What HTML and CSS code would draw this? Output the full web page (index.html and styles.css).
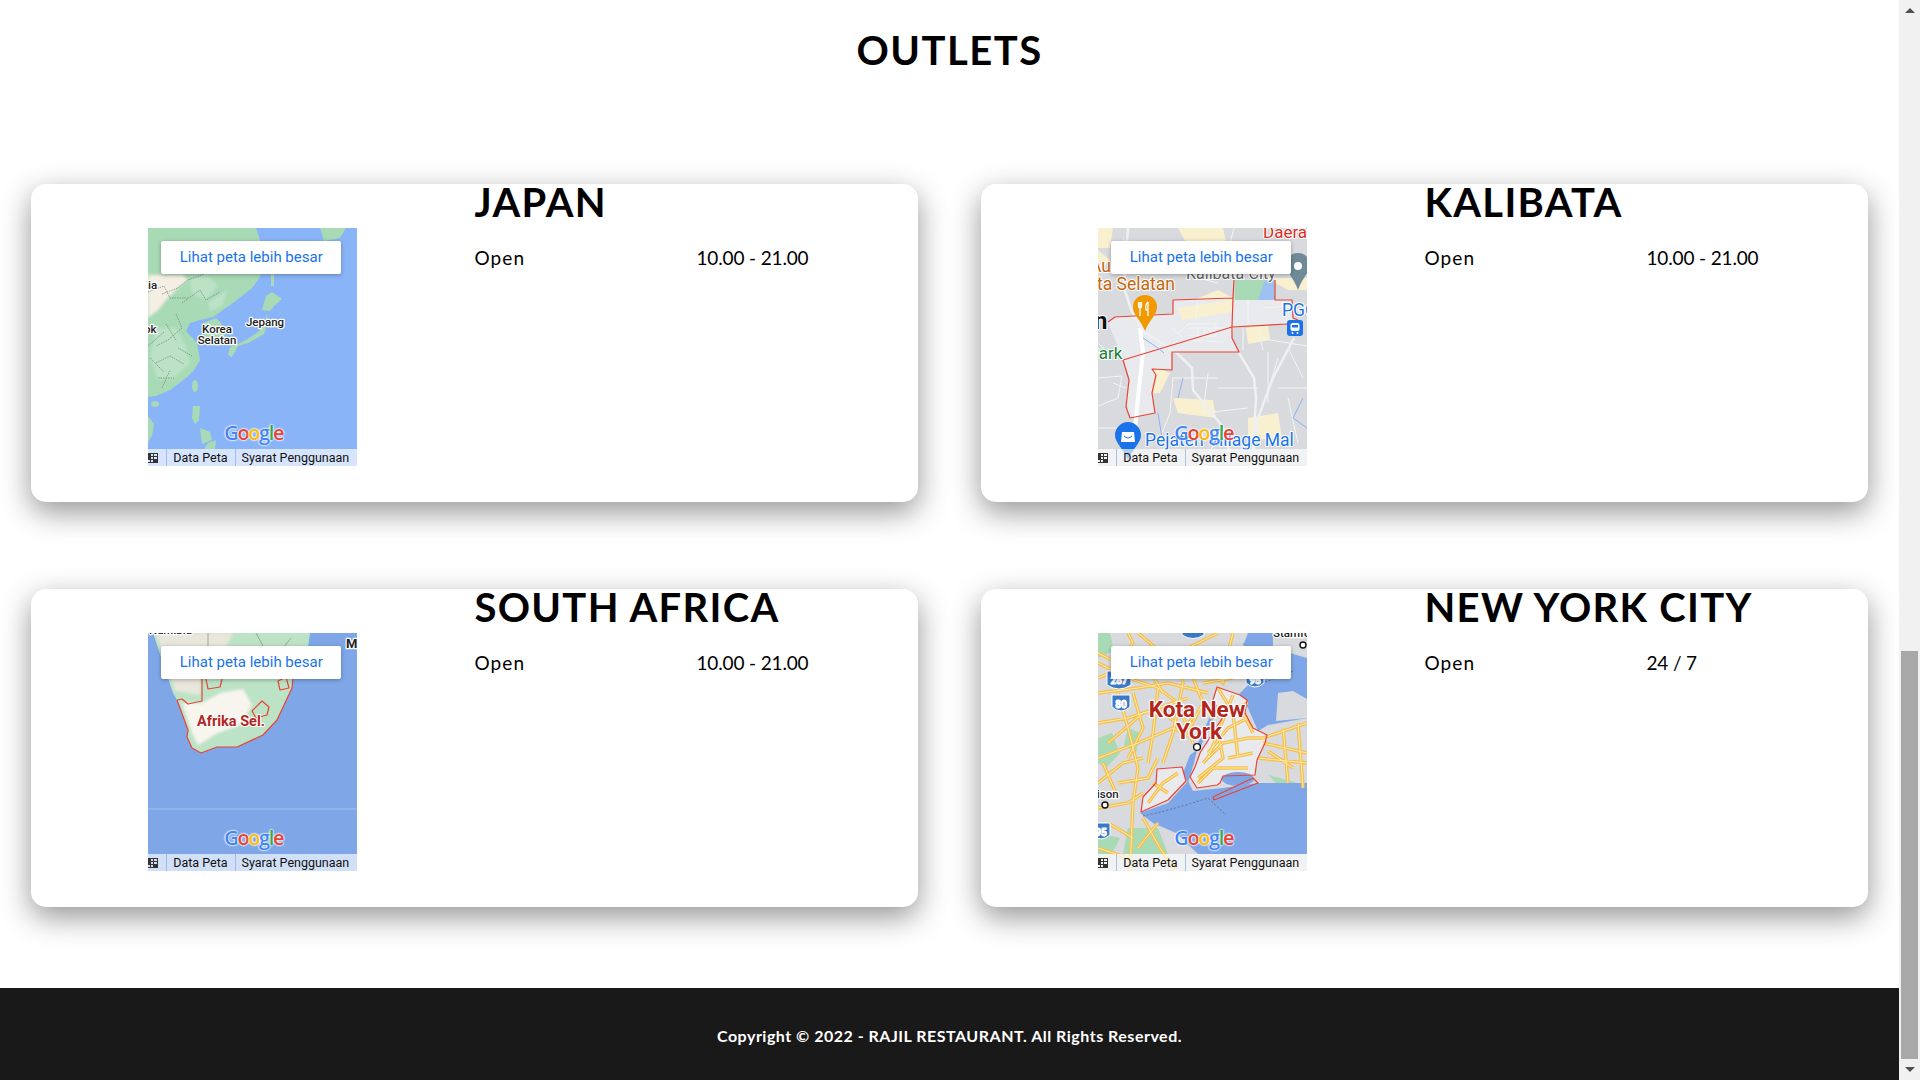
FILE: index.html
```html
<!DOCTYPE html>
<html lang="en">
<head>
    <meta charset="UTF-8">
    <title>Outlets - Rajil Restaurant</title>
    <link rel="stylesheet" href="styles.css">
</head>
<body>
<div class="page">
    <main class="outlets">
        <h1 class="outlets-title">OUTLETS</h1>
        <div class="outlet-grid">

            <!-- japan -->
            <section class="card">
                <div class="card-map">
                    <div class="map">
                        <svg class="map-art" viewBox="0 0 209 238">
                            <rect class="sea-light" width="209" height="238"/>
                            <path class="land" d="M0,0 H108 L112,12 L113,46 L110,52 L104,60 L85,75 L72,84 L65,89 L52,92 L42,95 L38,103 L49,115 L52,132 L46,142 L39,149 L22,162 L8,168 L0,169 Z"/>
                            <path class="land-pale soft" d="M0,47 L35,47 L40,52 L30,60 L20,70 L10,82 L0,90 Z"/>
                            <path class="land-soft soft" d="M42,50 L60,48 L70,58 L58,72 L44,66 Z M8,100 L28,100 L38,118 L42,135 L26,150 L10,152 L2,130 Z M60,74 L80,62 L74,78 L62,84 Z"/>
                            <path class="land" d="M55,95 L68,90 L74,96 L78,110 L70,118 L58,116 Z"/>
                            <path class="land" d="M172,0 H198 L192,10 L176,13 Z"/>
                            <path class="land" d="M118,68 L124,64 L134,71 L126,78 L122,83 L114,82 Z M123,44 L126,38 L126,58 L123,58 Z"/>
                            <path class="land" d="M119,86 L116,98 L110,104 L98,112 L90,116 L82,119 L80,127 L84,129 L90,118 L100,115 L116,106 L120,94 Z"/>
                            <ellipse class="land" cx="47" cy="158" rx="3" ry="6"/>
                            <ellipse class="land" cx="7" cy="176" rx="4" ry="3"/>
                            <path class="land" d="M0,188 L6,196 L4,208 L0,214 Z M45,178 H52 L51,192 L47,196 L44,190 Z M52,200 L62,204 L64,212 L54,216 Z M60,215 L68,212 L67,221 H56 Z"/>
                            <path class="border" d="M14,66 L30,60 L40,52 L56,46 M34,75 L52,62 L58,72 L72,64 M28,86 L34,100 L20,112 L8,118 M8,135 L22,128 L36,136 M10,150 L26,150 M18,96 L28,112 M2,130 L16,144 M0,118 L16,104 M30,120 L44,128 M14,160 L22,142"/>
                            <path class="border" d="M0,64 L16,58 L22,70 L40,70"/>
                            <text class="lbl" x="0" y="61">ia</text>
                            <text class="lbl" x="-4" y="105">ok</text>
                            <text class="lbl mid" x="69" y="105">Korea</text>
                            <text class="lbl mid" x="69" y="116">Selatan</text>
                            <text class="lbl mid" x="117" y="98">Jepang</text>
                        </svg>
                        <a class="map-link">Lihat peta lebih besar</a>
                        <span class="map-logo"><i class="c-b">G</i><i class="c-r">o</i><i class="c-y">o</i><i class="c-b">g</i><i class="c-g">l</i><i class="c-r">e</i></span>
                        <div class="map-strip">
                            <span class="strip-keys"><svg viewBox="0 0 10 10"><path d="M0,0 H10 V10 H0 Z M3,1 V3 H5 V1 Z M6,1 V3 H9 V1 Z M3,4 V6 H5 V4 Z M6,4 V6 H9 V4 Z M3,7 V9 H5 V7 Z M0,7 V9 H2 V7 Z" fill-rule="evenodd"/></svg></span>
                            <span class="strip-item">Data Peta</span>
                            <span class="strip-item">Syarat Penggunaan</span>
                        </div>
                    </div>
                </div>
                <div class="card-info">
                    <h2 class="outlet-name">JAPAN</h2>
                    <div class="outlet-hours">
                        <span class="hours-label">Open</span>
                        <span class="hours-time">10.00 - 21.00</span>
                    </div>
                </div>
            </section>

            <!-- kalibata -->
            <section class="card">
                <div class="card-map">
                    <div class="map">
                        <svg class="map-art" viewBox="0 0 209 238">
                            <rect class="ground" width="209" height="238"/>
                            <path class="patch" d="M0,0 H15 L12,20 H0 Z M80,0 H125 L128,14 L90,18 Z M168,50 H209 V62 H190 Z M120,62 L135,70 L100,80 L90,74 Z M148,100 L170,96 L172,112 L150,116 Z M48,135 L72,145 L62,165 L50,165 Z M75,170 L115,172 L118,190 L80,185 Z M150,190 L180,185 L184,210 L150,212 Z M0,22 L12,32 L0,45 Z"/>
                            <path class="park" d="M137,52 H177 V72 H137 Z"/>
                            <path class="pond" d="M160,72 L166,54 L176,50 L177,72 Z"/>
                            <path class="area" d="M10,94 L17,89 L75,86 L75,72 L135,70 L136,99 L134,110 L141,124 L74,124 L74,142 L54,141 L58,147 L54,165 L57,185 L32,190 L28,179 L31,152 L25,132 Z"/>
                            <path class="area" d="M136,72 L194,72 L195,96 L134,99 Z"/>
                            <path class="patch" d="M80,80 L120,74 L134,72 L134,84 L84,92 Z"/>
                            <g class="street">
                                <path d="M0,150 L24,148 L20,170 L0,178 M0,200 H30 M28,160 L15,155 M90,100 H130 M80,106 L90,96 H118 V108 H92 M90,112 L125,114 M100,72 L98,92 M74,100 L85,110 M100,100 V108 M106,100 V108 M112,100 V108"/>
                                <path d="M75,150 L72,185 L60,215 M74,150 H120 M110,145 L105,185 M120,160 H160 M105,185 L150,180 M160,110 L209,118 M150,72 V96 M165,80 L190,78 M170,124 V175 M180,130 L168,170 M180,160 H209 M190,170 L200,215 M130,200 L110,225 M185,30 L209,46 M136,0 L132,15 M100,50 L120,55 M25,10 L40,40 M0,115 L10,125 M145,100 V122 M160,100 L165,122 M190,120 L205,150"/>
                            </g>
                            <path class="road-big" d="M42,100 L45,125 L41,160 L38,190 L36,215"/>
                            <path class="road-mid" d="M26,60 L34,84 L46,104 L78,124 L94,140 L95,162 L125,199 L132,225 M141,125 L156,150 L158,170 L155,222 M196,110 L175,150 L160,190 L156,222 M30,0 L26,60"/>
                            <path class="boundary" d="M10,94 L17,89 L75,86 L75,72 L135,70 L136,52 M177,52 L177,72 L194,72 L195,90 L200,92 M135,70 L134,99 L190,96 M134,99 L134,110 L141,124 L74,124 L74,142 L54,141 L58,147 L54,165 L57,185 L32,190 L28,179 L31,152 L25,132 Z"/>
                            <path class="river" d="M45,110 L60,120 L66,125 M85,150 L80,170 M60,185 L64,210 M205,170 L195,190 L209,200"/>
                            <text class="poi-red" x="165" y="10">Daera</text>
                            <text class="poi-gray" x="88" y="51">Kalibata-City</text>
                            <text class="poi-orange" x="-8" y="44">Aur</text>
                            <text class="poi-orange" x="-1" y="62">ta Selatan</text>
                            <text class="poi-dark" x="-4" y="101">n</text>
                            <text class="poi-green" x="-10" y="131">Park</text>
                            <text class="poi-blue" x="184" y="88">PGC</text>
                            <text class="poi-blue" x="47" y="218">Pejaten Village Mal</text>
                            <path class="pin-slate" d="M200,25 C207,25 212,30 212,37 C212,44 204,50 200,62 C196,50 188,44 188,37 C188,30 193,25 200,25 Z"/>
                            <circle class="pin-dot" cx="200" cy="38" r="4"/>
                            <path class="pin-orange" d="M47,67 C54,67 59,72 59,79 C59,87 51,92 47,103 C43,92 35,87 35,79 C35,72 40,67 47,67 Z"/>
                            <path class="pin-mark" d="M42,74 V80 M40.5,74 V78 Q40.5,80 42,80 Q43.5,80 43.5,78 V74 M42,80 V88 M50,74 Q47,76 48,82 H50 M50,74 V88"/>
                            <rect class="pin-blue" x="189" y="92" width="16" height="16" rx="3"/>
                            <rect class="pin-dot" x="192.5" y="95" width="9" height="8" rx="2"/>
                            <rect class="pin-blue" x="194" y="97" width="6" height="2.5"/>
                            <circle class="pin-dot" cx="194.5" cy="105" r="1"/>
                            <circle class="pin-dot" cx="199.5" cy="105" r="1"/>
                            <path class="pin-blue" d="M30,194 C37,194 43,200 43,207 C43,215 35,220 30,232 C25,220 17,215 17,207 C17,200 23,194 30,194 Z"/>
                            <path class="pin-dot" d="M24,204 H36 L37,214 H23 Z"/>
                            <path class="pin-loop" d="M27,204 Q27,200 30,200 Q33,200 33,204 M26,208 Q30,212 34,208"/>
                        </svg>
                        <a class="map-link">Lihat peta lebih besar</a>
                        <span class="map-logo"><i class="c-b">G</i><i class="c-r">o</i><i class="c-y">o</i><i class="c-b">g</i><i class="c-g">l</i><i class="c-r">e</i></span>
                        <div class="map-strip">
                            <span class="strip-keys"><svg viewBox="0 0 10 10"><path d="M0,0 H10 V10 H0 Z M3,1 V3 H5 V1 Z M6,1 V3 H9 V1 Z M3,4 V6 H5 V4 Z M6,4 V6 H9 V4 Z M3,7 V9 H5 V7 Z M0,7 V9 H2 V7 Z" fill-rule="evenodd"/></svg></span>
                            <span class="strip-item">Data Peta</span>
                            <span class="strip-item">Syarat Penggunaan</span>
                        </div>
                    </div>
                </div>
                <div class="card-info">
                    <h2 class="outlet-name">KALIBATA</h2>
                    <div class="outlet-hours">
                        <span class="hours-label">Open</span>
                        <span class="hours-time">10.00 - 21.00</span>
                    </div>
                </div>
            </section>

            <!-- south africa -->
            <section class="card">
                <div class="card-map">
                    <div class="map">
                        <svg class="map-art" viewBox="0 0 209 238">
                            <rect class="sea" width="209" height="238"/>
                            <path class="land-green" d="M5,0 L15,30 L25,60 L29,67 L40,97 L39,104 L44,115 L53,120 L69,114 L89,114 L115,102 L129,87 L144,55 L145,44 L160,14 L162,0 Z"/>
                            <path class="land-sand soft" d="M8,0 L18,30 L27,58 L52,62 L54,0 Z M54,0 H85 L70,30 L54,44 Z"/>
                            <path class="land-cream soft" d="M34,70 L54,70 L72,60 L95,56 L104,72 L92,92 L70,100 L50,112 L44,100 Z"/>
                            <path class="land-green" d="M104,78 L114,68 L121,74 L119,82 L108,85 Z"/>
                            <path class="boundary" d="M29,67 L34,66 L40,71 L54,68 V46 M29,67 L40,97 L39,104 L44,115 L53,120 L69,114 L89,114 L115,102 L129,87 L144,55 L145,44 M104,78 L114,68 L121,74 L119,82 L108,85 Z M130,48 L138,44 L141,55 L132,57 Z M58,46 L60,56 L72,54 L74,46"/>
                            <path class="border-solid" d="M60,0 V14 M108,0 L115,13 M143,5 L135,15"/>
                            <path class="sea-line" d="M0,176 H209"/>
                            <text class="lbl" x="1" y="1">Namibia</text>
                            <text class="lbl bold" x="198" y="15">M</text>
                            <text class="lbl-red" x="49" y="93">Afrika Sel.</text>
                        </svg>
                        <a class="map-link">Lihat peta lebih besar</a>
                        <span class="map-logo"><i class="c-b">G</i><i class="c-r">o</i><i class="c-y">o</i><i class="c-b">g</i><i class="c-g">l</i><i class="c-r">e</i></span>
                        <div class="map-strip">
                            <span class="strip-keys"><svg viewBox="0 0 10 10"><path d="M0,0 H10 V10 H0 Z M3,1 V3 H5 V1 Z M6,1 V3 H9 V1 Z M3,4 V6 H5 V4 Z M6,4 V6 H9 V4 Z M3,7 V9 H5 V7 Z M0,7 V9 H2 V7 Z" fill-rule="evenodd"/></svg></span>
                            <span class="strip-item">Data Peta</span>
                            <span class="strip-item">Syarat Penggunaan</span>
                        </div>
                    </div>
                </div>
                <div class="card-info">
                    <h2 class="outlet-name">SOUTH AFRICA</h2>
                    <div class="outlet-hours">
                        <span class="hours-label">Open</span>
                        <span class="hours-time">10.00 - 21.00</span>
                    </div>
                </div>
            </section>

            <!-- new york -->
            <section class="card">
                <div class="card-map">
                    <div class="map">
                        <svg class="map-art" viewBox="0 0 209 238">
                            <defs>
                                <path id="nyc-roads" d="M0,30 L30,45 L60,55 L80,70 L95,110 M0,60 L40,55 L70,50 L110,60 M0,90 L30,85 L60,75 L90,65 M0,125 L40,110 L75,95 L95,105 M20,60 L30,95 L40,135 L35,170 M60,55 L55,100 L50,130 M80,20 L85,50 L75,100 L65,130 M0,175 L30,170 L45,160 M35,170 L32,238 M45,185 L62,215 L78,238 M0,20 L20,30 L35,10 L30,0 M40,0 L70,25 L100,10 L120,0 M100,25 L125,50 L130,20 L135,0 M105,130 L125,110 L150,105 L165,105 M120,55 L135,80 L140,125 M110,120 L130,95 L150,85 M135,62 L120,100 L110,125 M100,150 L115,135 L150,135 M145,80 L155,100 M50,170 L65,150 L80,140 M55,150 L70,160 M165,105 L209,90 M165,110 L209,120 M160,125 L209,130 M185,95 L190,150 M200,90 L205,155 M170,118 L195,135 M0,150 L25,130 L45,125 M10,190 L35,205 M0,215 L30,225 M0,45 L35,30 L60,35 L100,40 M10,110 L45,80 L70,75 M35,60 L45,95 L30,125 M65,80 L85,95 L100,80 M95,45 L105,70 L92,95 M50,35 L65,60 M20,150 L50,145 L60,125 M5,130 L20,165 M120,30 L150,35 M105,50 L135,45 M40,215 L60,190 M100,145 L125,125 L120,100 M130,125 L155,120 M112,85 L150,70"/>
                            </defs>
                            <rect class="ground" width="209" height="238"/>
                            <path class="park" d="M0,0 H12 L16,18 L0,25 Z M30,95 L42,100 L38,120 L26,112 Z M0,105 L14,100 L22,120 L8,135 L0,130 Z M30,195 L60,195 L70,221 H25 Z M0,200 L22,205 L14,221 H0 Z M170,142 L200,150 L180,152 Z"/>
                            <path class="sea" d="M140,0 H175 V15 L209,25 V85 L170,92 L160,98 L150,75 L140,62 L152,50 L160,45 Z"/>
                            <path class="ground" d="M180,60 L195,58 L209,66 V85 L178,88 Z M130,0 H150 L146,10 L130,18 Z"/>
                            <path class="sea" d="M209,150 L160,150 L125,155 L95,158 L90,148 L70,170 L42,180 L55,190 L78,200 L100,221 H209 Z"/>
                            <path class="sea" d="M90,150 L96,130 L99,117 L92,122 L85,140 Z"/>
                            <path class="river-wide" d="M99,117 L112,88 L125,60"/>
                            <path class="area" d="M59,136 L84,134 L88,148 L70,167 L43,179 L45,164 L58,150 Z"/>
                            <path class="area" d="M119,54 L142,62 L149,67 L147,80 L155,95 L169,102 L167,110 L159,127 L157,142 L125,143 L122,150 L119,152 L99,155 L92,144 L97,134 L102,120 L125,84 L115,67 Z"/>
                            <ellipse class="sea" cx="140" cy="146" rx="16" ry="7"/>
                            <path class="dash" d="M45,183 Q70,178 110,165 L128,182 M195,38 L165,50"/>
                            <use class="road-o" href="#nyc-roads"/>
                            <use class="road-i" href="#nyc-roads"/>
                            <path class="boundary" d="M59,136 L84,134 L88,148 L70,167 L43,179 L45,164 L58,150 Z M119,54 L142,62 L149,67 L147,80 L155,95 L169,102 L167,110 L159,127 L157,142 L125,143 L122,150 L119,152 L99,155 L92,144 L97,134 L102,120 L125,84 L115,67 Z M115,164 L155,145 L160,150 L116,167 Z"/>
                            <text class="lbl" x="175" y="4">Stamford</text>
                            <text class="lbl" x="-14" y="165">Edison</text>
                            <circle class="town" cx="205" cy="12" r="3"/>
                            <circle class="town" cx="7" cy="172" r="3"/>
                            <path class="shield" d="M9,38 H33 V52 Q21,60 9,52 Z"/>
                            <text class="shield-no" x="21" y="51">287</text>
                            <path class="shield" d="M14,62 H32 V74 Q23,82 14,74 Z"/>
                            <text class="shield-no" x="23" y="75">80</text>
                            <path class="shield" d="M148,38 H166 V50 Q157,58 148,50 Z"/>
                            <text class="shield-no" x="157" y="51">95</text>
                            <path class="shield" d="M-6,190 H12 V202 Q3,210 -6,202 Z"/>
                            <text class="shield-no" x="3" y="203">95</text>
                            <path class="shield" d="M84,-8 H106 V2 Q95,9 84,2 Z"/>
                            <text class="lbl-city" x="99" y="84">Kota New</text>
                            <text class="lbl-city" x="101" y="106">York</text>
                            <circle class="town" cx="99" cy="114" r="3.4"/>
                        </svg>
                        <a class="map-link">Lihat peta lebih besar</a>
                        <span class="map-logo"><i class="c-b">G</i><i class="c-r">o</i><i class="c-y">o</i><i class="c-b">g</i><i class="c-g">l</i><i class="c-r">e</i></span>
                        <div class="map-strip">
                            <span class="strip-keys"><svg viewBox="0 0 10 10"><path d="M0,0 H10 V10 H0 Z M3,1 V3 H5 V1 Z M6,1 V3 H9 V1 Z M3,4 V6 H5 V4 Z M6,4 V6 H9 V4 Z M3,7 V9 H5 V7 Z M0,7 V9 H2 V7 Z" fill-rule="evenodd"/></svg></span>
                            <span class="strip-item">Data Peta</span>
                            <span class="strip-item">Syarat Penggunaan</span>
                        </div>
                    </div>
                </div>
                <div class="card-info">
                    <h2 class="outlet-name">NEW YORK CITY</h2>
                    <div class="outlet-hours">
                        <span class="hours-label">Open</span>
                        <span class="hours-time">24 / 7</span>
                    </div>
                </div>
            </section>

        </div>
        <footer class="footer">Copyright &copy; 2022 - RAJIL RESTAURANT. All Rights Reserved.</footer>
    </main>

    <div class="scrollbar">
        <span class="scroll-up"></span>
        <div class="scroll-track"><div class="scroll-thumb"></div></div>
        <span class="scroll-down"></span>
    </div>
</div>
</body>
</html>
```

FILE: styles.css
```css
* {
    margin: 0;
    padding: 0;
    box-sizing: border-box;
}

html, body {
    height: 100%;
    overflow: hidden;
}

body {
    background-color: #fff;
    color: #000;
    font-family: "Lato", "Open Sans", sans-serif;
}

.page {
    display: flex;
    height: 1080px;
}

.outlets {
    flex: 1;
    display: flex;
    flex-direction: column;
    min-width: 0;
}

.outlets-title {
    height: 184px;
    padding-top: 26px;
    text-align: center;
    font-size: 40px;
    line-height: 48px;
    font-weight: 700;
    letter-spacing: 1.5px;
}

.outlet-grid {
    display: grid;
    grid-template-columns: 887px 887px;
    grid-auto-rows: 318px;
    column-gap: 63px;
    row-gap: 87px;
    padding: 0 30px 0 31px;
}

.card {
    display: flex;
    background-color: #fff;
    border-radius: 15px;
    box-shadow: 0 10px 30px rgba(0, 0, 0, 0.42);
}

.card-map {
    flex: 0 0 50%;
    display: flex;
    justify-content: center;
    padding-top: 44px;
}

.card-info {
    flex: 1;
}

.outlet-name {
    font-size: 40px;
    line-height: 36px;
    font-weight: 700;
    letter-spacing: 1.3px;
}

.outlet-hours {
    display: grid;
    grid-template-columns: 222px 1fr;
    margin-top: 26px;
    font-size: 19px;
    line-height: 24px;
}

.hours-label {
    letter-spacing: 1.1px;
}

.hours-time {
    letter-spacing: -0.15px;
}

.footer {
    flex: 1;
    margin-top: 81px;
    padding-top: 2px;
    background-color: #191919;
    color: #fff;
    display: flex;
    align-items: center;
    justify-content: center;
    font-size: 16px;
    font-weight: 700;
    letter-spacing: 0.5px;
}

/* scrollbar */
.scrollbar {
    flex: 0 0 21px;
    display: flex;
    flex-direction: column;
    align-items: center;
    background-color: #f1f1f1;
}

.scroll-up, .scroll-down {
    flex: 0 0 21px;
    width: 0;
    height: 0;
    border-left: 5px solid transparent;
    border-right: 5px solid transparent;
}

.scroll-up {
    flex-basis: 0;
    margin: 8px 0 13px;
    border-bottom: 5px solid #505050;
}

.scroll-down {
    flex-basis: 0;
    margin: 8px 0;
    border-top: 5px solid #505050;
}

.scroll-track {
    flex: 1;
    width: 100%;
    display: flex;
    flex-direction: column;
    justify-content: flex-end;
    padding: 0 2px;
}

.scroll-thumb {
    height: 408px;
    background-color: #a8a8a8;
}

/* map embed */
.map {
    position: relative;
    width: 209px;
    height: 238px;
    overflow: hidden;
    font-family: "Roboto", sans-serif;
}

.map-art {
    display: block;
    width: 209px;
    height: 238px;
}

.map-link {
    position: absolute;
    left: 13px;
    top: 13px;
    width: 180px;
    height: 33px;
    background-color: #fff;
    border-radius: 2px;
    box-shadow: 0 1px 4px rgba(0, 0, 0, 0.3);
    color: #1a73e8;
    font-size: 15px;
    line-height: 33px;
    text-align: center;
}

.map-logo {
    position: absolute;
    left: 76px;
    top: 192px;
    font-family: "Open Sans", sans-serif;
    font-size: 20px;
    line-height: 26px;
    font-weight: 600;
    letter-spacing: -1.4px;
    text-shadow: 0 0 2px #fff, 0 0 2px #fff, 0 0 2px #fff;
}

.map-logo i {
    font-style: normal;
}

.c-b { color: #4285f4; }
.c-r { color: #ea4335; }
.c-y { color: #fbbc05; }
.c-g { color: #34a853; }

.map-strip {
    position: absolute;
    left: 0;
    right: 0;
    bottom: 0;
    height: 17px;
    display: flex;
    align-items: center;
    background-color: rgba(255, 255, 255, 0.65);
    color: #111;
    font-size: 12.5px;
    line-height: 18px;
}

.strip-keys {
    flex: 0 0 19px;
    height: 17px;
    padding-top: 4px;
    border-right: 1px solid rgba(130, 160, 220, 0.6);
}

.strip-keys svg {
    display: block;
    width: 10px;
    height: 10px;
    fill: #333;
}

.strip-item {
    padding: 0 7px 0 6px;
    white-space: nowrap;
}

.strip-item + .strip-item {
    padding-left: 6px;
    border-left: 1px solid rgba(130, 160, 220, 0.6);
}

/* map drawings */
.soft { filter: blur(1.5px); }
.sea-light { fill: #8ab4f8; }
.sea { fill: #7fa7e8; }
.sea-line { stroke: #a3c0f0; stroke-width: 1; fill: none; }
.land { fill: #a8dab5; }
.land-soft { fill: #bce2c6; }
.land-pale { fill: #f5efe3; }
.land-green { fill: #bde3c6; }
.land-sand { fill: #e9e6dc; }
.land-cream { fill: #f8f5ee; }
.ground { fill: #d8dadd; }
.area { fill: #e8eaed; }
.patch { fill: #f8f0cf; }
.park { fill: #a8dab5; }
.pond { fill: #9cc1f2; }
.street { stroke: #f3f4f6; stroke-width: 1; fill: none; }
.road-big { stroke: #fff; stroke-width: 4; fill: none; }
.road-mid { stroke: #eef0f2; stroke-width: 2.5; fill: none; }
.river { stroke: #8ab4f8; stroke-width: 1; fill: none; }
.river-wide { stroke: #7fa7e8; stroke-width: 4; fill: none; }
.boundary { stroke: #ea4335; stroke-width: 1.2; fill: none; stroke-linejoin: round; }
.border { stroke: #6f7f76; stroke-width: 0.7; stroke-dasharray: 1.5 1; fill: none; }
.border-solid { stroke: #8a8a80; stroke-width: 0.7; fill: none; }
.dash { stroke: #5a6470; stroke-width: 0.8; stroke-dasharray: 2 2; fill: none; }
.road-o { stroke: #f5c04f; stroke-width: 3.4; fill: none; }
.road-i { stroke: #fdeaa8; stroke-width: 1; fill: none; }
.town { fill: #fff; stroke: #111; stroke-width: 1.4; }

.map-art text {
    font-family: "Roboto", sans-serif;
    paint-order: stroke;
    stroke: #fff;
    stroke-linejoin: round;
}

.lbl { font-size: 11.5px; font-weight: 500; fill: #222; stroke-width: 2.5; }
.lbl.mid { text-anchor: middle; }
.lbl.bold { font-weight: 700; font-size: 13px; }
.lbl-red { font-size: 14.5px; font-weight: 700; fill: #b3261e; stroke-width: 2; }
.lbl-city { font-size: 22.5px; font-weight: 700; fill: #b3261e; stroke-width: 2.5; text-anchor: middle; }
.poi-red { font-size: 17px; fill: #d93025; stroke-width: 2; }
.poi-gray { font-size: 16px; fill: #5f6368; stroke-width: 2; }
.poi-orange { font-size: 17.5px; fill: #c5660e; stroke-width: 2; }
.poi-dark { font-size: 24px; font-weight: 700; fill: #111; stroke-width: 2; }
.poi-green { font-size: 17px; fill: #188038; stroke-width: 2; }
.poi-blue { font-size: 17.5px; fill: #1a73e8; stroke-width: 2; }
.shield-no { font-size: 10px; font-weight: 700; fill: #fff; stroke: none; text-anchor: middle; }

.shield { fill: #3a78c9; stroke: #fff; stroke-width: 1; }
.pin-slate { fill: #6f8a98; }
.pin-orange { fill: #f29900; }
.pin-blue { fill: #1a73e8; }
.pin-dot { fill: #fff; }
.pin-mark { stroke: #fff; stroke-width: 1.3; fill: none; }
.pin-loop { stroke: #1a73e8; stroke-width: 1; fill: none; }
```
